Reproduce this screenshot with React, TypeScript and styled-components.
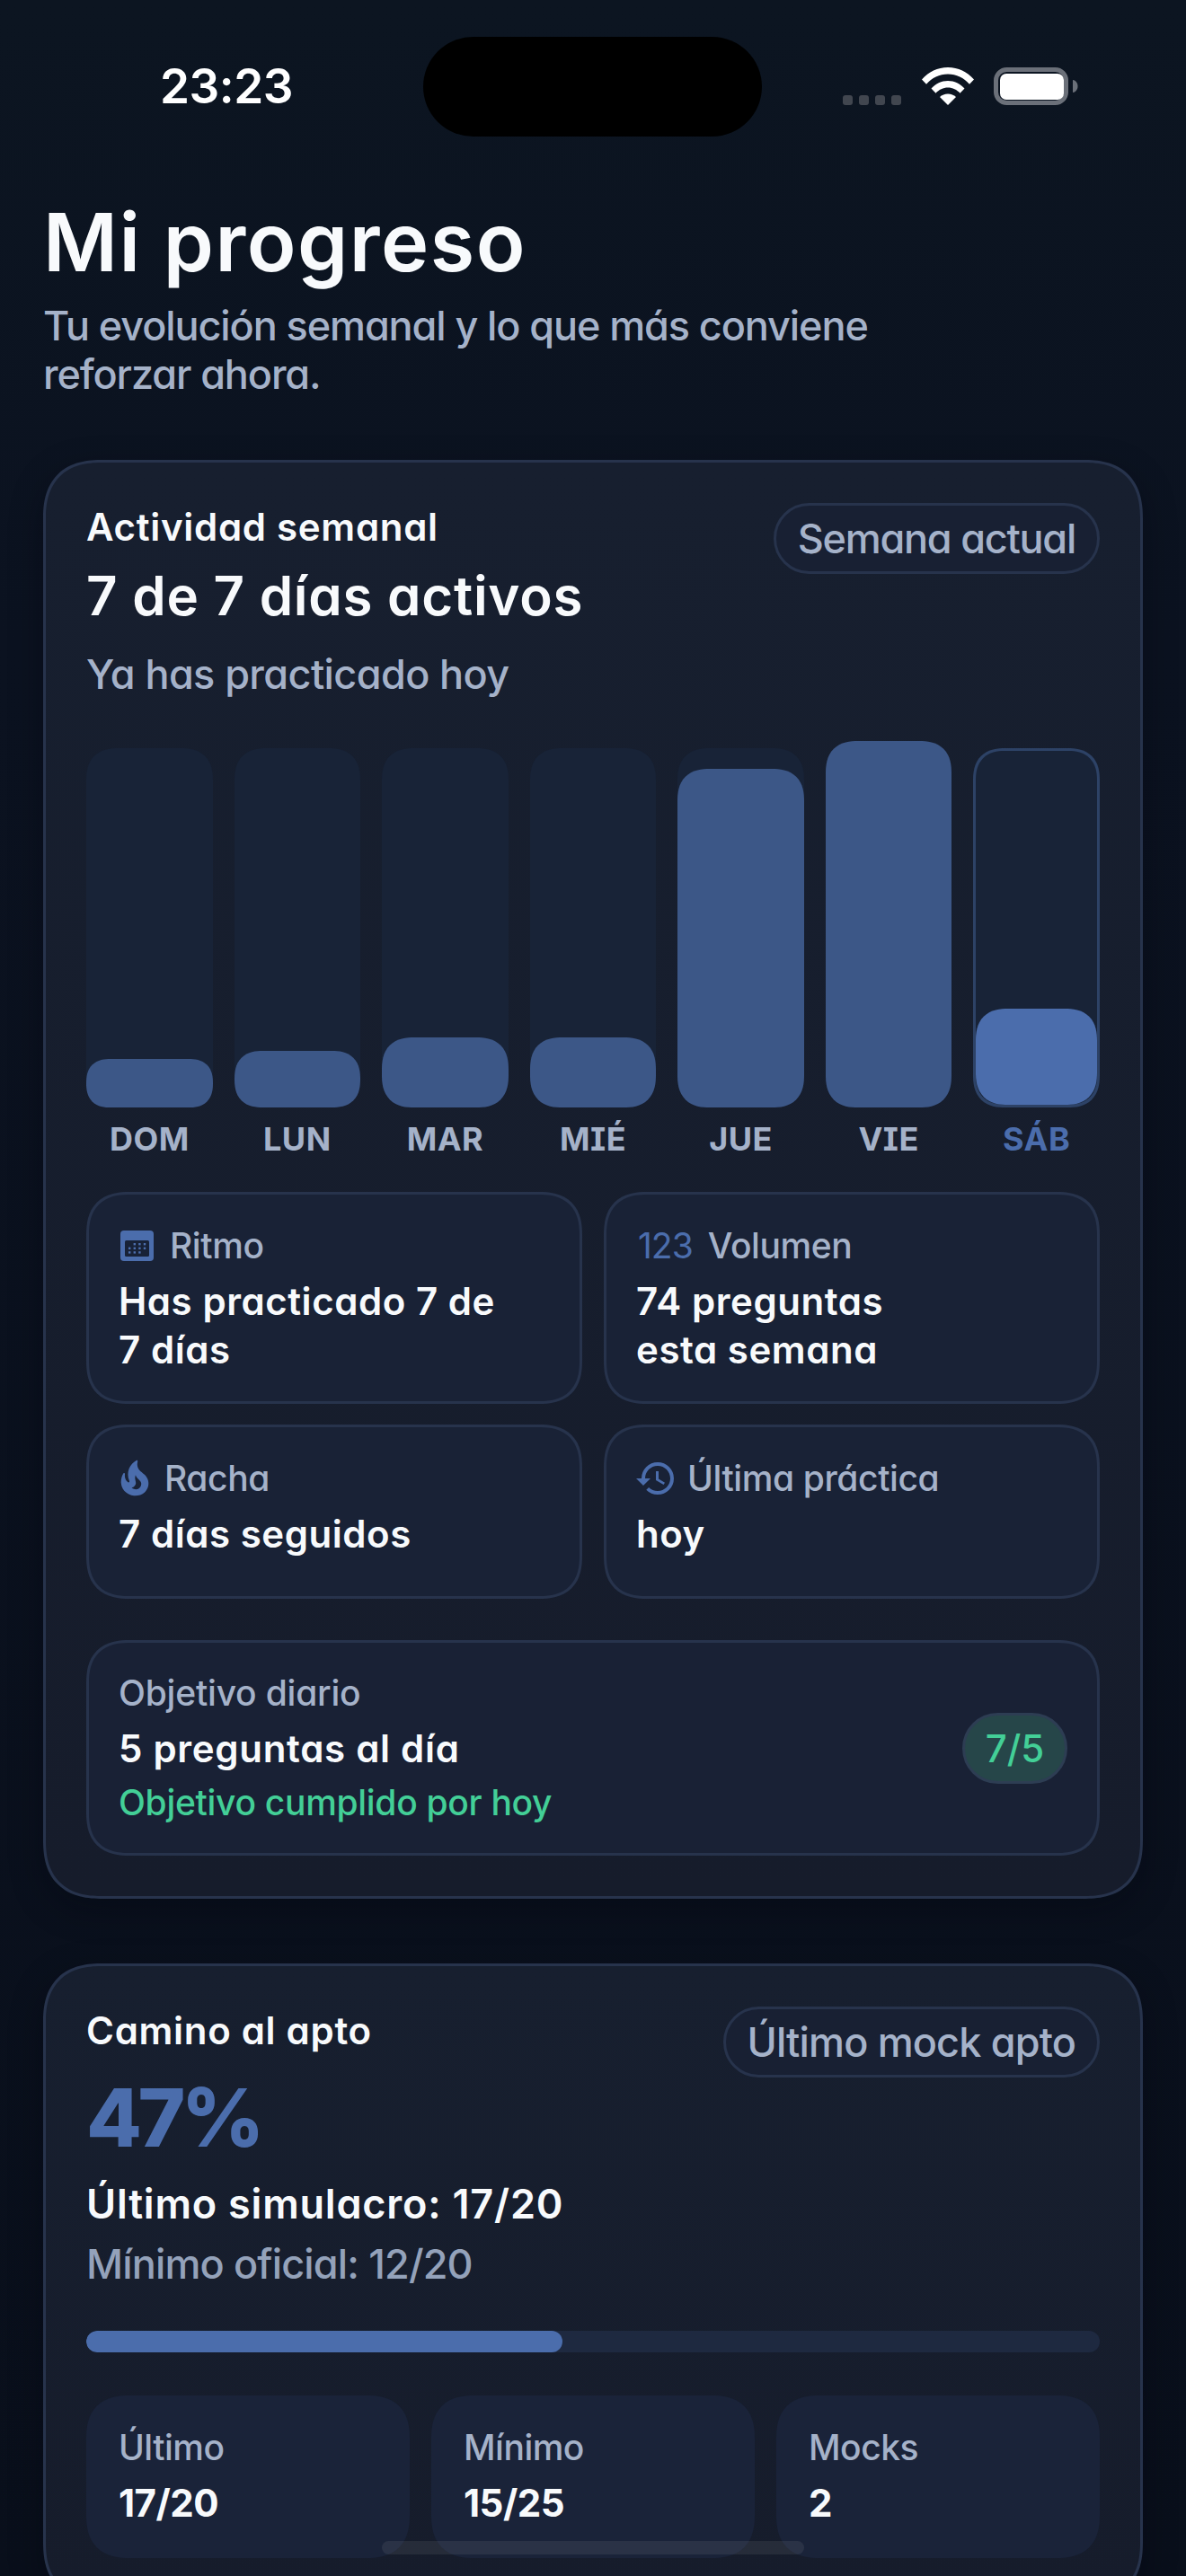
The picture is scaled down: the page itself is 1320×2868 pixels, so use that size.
import React from "react";
import styled, { createGlobalStyle } from "styled-components";

const Global = createGlobalStyle`
  html, body { margin: 0; padding: 0; background: #0a101c; }
  body {
    font-family: Inter, "Noto Sans", sans-serif;
    font-feature-settings: "cv11", "cv08", "ss03";
    color: #f8fafc;
  }
  * { box-sizing: border-box; }
`;

const Screen = styled.div`
  position: relative;
  width: 1320px;
  height: 2868px;
  overflow: hidden;
  background: linear-gradient(180deg, #0c1521 0%, #0b1220 25%, #090f1b 100%);
  padding: 0 48px;
`;

const StatusBar = styled.div`
  display: grid;
  grid-template-columns: 423px 377px 1fr;
  height: 204px;
  padding-top: 41px;
  margin: 0;
`;

const Time = styled.div`
  font-family: Inter, sans-serif;
  font-feature-settings: normal;
  font-weight: 600;
  font-size: 53px;
  line-height: 111px;
  padding-left: 130px;
  letter-spacing: -0.5px;
  color: #fff;
`;

const Island = styled.div`
  width: 377px;
  height: 111px;
  border-radius: 56px;
  background: #000;
`;

const StatusIcons = styled.div`
  display: flex;
  align-items: flex-start;
  padding: 34px 0 0 90px;
`;

const SignalDots = styled.div`
  display: flex;
  gap: 7px;
  padding-top: 31px;
  margin-right: 23px;
`;

const SignalDot = styled.span`
  width: 11px;
  height: 11px;
  border-radius: 3px;
  background: #41464f;
`;

const Wifi = styled.svg`
  width: 58px;
  height: 42px;
  margin-right: 22px;
`;

const Battery = styled.svg`
  width: 94px;
  height: 42px;
`;

const Title = styled.h1`
  margin: 0;
  font-size: 90px;
  line-height: 132px;
  font-weight: 600;
  letter-spacing: 1.5px;
  color: #f8fafc;
`;

const Subtitle = styled.p`
  margin: 0 0 68px;
  font-size: 45px;
  line-height: 54px;
  font-weight: 450;
  letter-spacing: -1.1px;
  color: #a5b2c9;
  max-width: 1000px;
`;

const Card = styled.section`
  border: 3px solid #27334c;
  border-radius: 66px;
  corner-shape: superellipse(1.3);
  padding: 45px 45px 45px;
  margin-bottom: 72px;
  background: linear-gradient(180deg, #171f2f 0%, #161c2b 100%);
  box-shadow: 0 12px 36px rgba(3, 6, 14, 0.35);
`;

const CardHead = styled.div`
  display: flex;
  justify-content: space-between;
  align-items: flex-start;
`;

const HeadText = styled.div`
  display: flex;
  flex-direction: column;
`;

const Eyebrow = styled.div`
  font-size: 42px;
  line-height: 54px;
  font-weight: 600;
  letter-spacing: 0.7px;
  color: #f8fafc;
`;

const Headline = styled.div`
  margin-top: 13px;
  font-size: 60px;
  line-height: 72px;
  font-weight: 600;
  letter-spacing: 0.75px;
  color: #f8fafc;
`;

const Lead = styled.div`
  margin-top: 25px;
  font-size: 45px;
  line-height: 54px;
  font-weight: 550;
  letter-spacing: -0.6px;
  color: #a5b2c9;
`;

const Pill = styled.div<{ $spacing: number }>`
  height: 79px;
  border: 3px solid #27334c;
  border-radius: 40px;
  padding: 0 24px;
  font-size: 45px;
  line-height: 73px;
  font-weight: 450;
  letter-spacing: ${(p) => p.$spacing}px;
  color: #a5b2c9;
  background: #182033;
  white-space: nowrap;
`;

const Chart = styled.div`
  display: grid;
  grid-template-columns: repeat(7, 1fr);
  gap: 24px;
  margin-top: 55px;
`;

const DayCol = styled.div`
  display: flex;
  flex-direction: column;
  align-items: stretch;
`;

const Track = styled.div<{ $today?: boolean }>`
  display: flex;
  flex-direction: column;
  justify-content: flex-end;
  height: 400px;
  border-radius: 36px;
  corner-shape: superellipse(1.3);
  background: #182337;
  border: ${(p) => (p.$today ? "3px solid #2d4266" : "0")};
`;

const Fill = styled.div<{ $today?: boolean }>`
  flex-shrink: 0;
  border-radius: 36px;
  corner-shape: superellipse(1.3);
  background: ${(p) => (p.$today ? "#4b6dac" : "#3c5787")};
`;

const DayLabel = styled.div<{ $today?: boolean }>`
  margin-top: 17px;
  text-align: center;
  font-size: 36px;
  line-height: 36px;
  font-weight: 700;
  letter-spacing: 0.5px;
  color: ${(p) => (p.$today ? "#4b6dac" : "#a5b2c9")};
`;

const InfoGrid = styled.div`
  display: grid;
  grid-template-columns: 1fr 1fr;
  gap: 23px 24px;
  margin-top: 41px;
`;

const InfoCard = styled.div`
  min-height: 194px;
  border: 3px solid #27334c;
  border-radius: 48px;
  corner-shape: superellipse(1.3);
  padding: 33px 33px 30px;
  background: #192236;
`;

const InfoHead = styled.div<{ $gap: number }>`
  display: flex;
  align-items: center;
  gap: ${(p) => p.$gap}px;
  height: 48px;
  font-size: 39px;
  line-height: 48px;
  font-weight: 550;
  letter-spacing: -0.4px;
  color: #a5b2c9;
`;

const IconNumbers = styled.span`
  margin-left: 2px;
  font-size: 39px;
  font-weight: 400;
  letter-spacing: -1px;
  color: #4b6dac;
`;

const IconSvg = styled.svg`
  flex-shrink: 0;
  fill: #4b6dac;
`;

const InfoValue = styled.div`
  margin-top: 11px;
  font-size: 42px;
  line-height: 54px;
  font-weight: 600;
  letter-spacing: 0.55px;
  color: #f8fafc;
`;

const GoalCard = styled.div`
  display: flex;
  align-items: center;
  justify-content: space-between;
  height: 240px;
  margin-top: 46px;
  border: 3px solid #27334c;
  border-radius: 48px;
  corner-shape: superellipse(1.3);
  padding: 0 33px;
  background: #192135;
`;

const GoalText = styled.div`
  display: flex;
  flex-direction: column;
`;

const GoalLabel = styled.div`
  font-size: 39px;
  line-height: 48px;
  font-weight: 550;
  letter-spacing: -0.2px;
  color: #a5b2c9;
`;

const GoalValue = styled.div`
  margin-top: 11px;
  font-size: 42px;
  line-height: 54px;
  font-weight: 600;
  letter-spacing: 0.7px;
  color: #f8fafc;
`;

const GoalDone = styled.div`
  margin-top: 9px;
  font-size: 39px;
  line-height: 48px;
  font-weight: 550;
  letter-spacing: -0.3px;
  color: #43cf97;
`;

const GoalBadge = styled.div`
  width: 117px;
  height: 79px;
  border: 3px solid #2d3d53;
  border-radius: 40px;
  background: #264649;
  text-align: center;
  font-size: 42px;
  line-height: 73px;
  font-weight: 500;
  color: #43cf97;
`;

const Percent = styled.div`
  margin-top: 22px;
  font-size: 90px;
  line-height: 96px;
  font-weight: 800;
  letter-spacing: -4.5px;
  color: #4b6dac;
`;

const Simulacro = styled.div`
  margin-top: 18px;
  font-size: 45px;
  line-height: 60px;
  font-weight: 600;
  letter-spacing: 0.8px;
  color: #f8fafc;
`;

const Minimum = styled.div`
  margin-top: 7px;
  font-size: 45px;
  line-height: 60px;
  font-weight: 450;
  letter-spacing: -0.85px;
  color: #94a2ba;
`;

const Progress = styled.div`
  height: 24px;
  margin-top: 44px;
  border-radius: 12px;
  background: #1e2940;
  overflow: hidden;
`;

const ProgressFill = styled.div<{ $value: number }>`
  width: ${(p) => p.$value}%;
  height: 100%;
  border-radius: 12px;
  background: #4b6dac;
`;

const Stats = styled.div`
  display: grid;
  grid-template-columns: repeat(3, 1fr);
  gap: 24px;
  margin-top: 48px;
`;

const Stat = styled.div`
  height: 181px;
  border-radius: 48px;
  corner-shape: superellipse(1.3);
  padding: 34px 36px;
  background: #1a2339;
`;

const StatLabel = styled.div`
  font-size: 39px;
  line-height: 48px;
  font-weight: 550;
  letter-spacing: -0.5px;
  color: #a5b2c9;
`;

const StatValue = styled.div`
  margin-top: 11px;
  font-size: 42px;
  line-height: 54px;
  font-weight: 700;
  letter-spacing: -0.5px;
  color: #f8fafc;
`;

const HomeIndicator = styled.div`
  position: absolute;
  left: 425px;
  top: 2829px;
  width: 470px;
  height: 15px;
  border-radius: 8px;
  background: rgba(255, 255, 255, 0.07);
`;

const days = [
  { label: "DOM", height: 54 },
  { label: "LUN", height: 63 },
  { label: "MAR", height: 78 },
  { label: "MIÉ", height: 78 },
  { label: "JUE", height: 377 },
  { label: "VIE", height: 408 },
  { label: "SÁB", height: 107, today: true },
];

const stats = [
  { label: "Último", value: "17/20" },
  { label: "Mínimo", value: "15/25" },
  { label: "Mocks", value: "2" },
];

const CalendarIcon = () => (
  <IconSvg width="37" height="34" viewBox="0 0 37 34" style={{ marginLeft: 2 }}>
    <rect x="0" y="0" width="37" height="34" rx="4" />
    <rect x="5" y="11" width="27" height="18" rx="1.5" fill="#182237" />
    {[0, 1, 2, 3].map((c) =>
      [0, 1, 2].map((r) =>
        c + r === 0 || (c === 3 && r === 2) ? null : (
          <rect key={`${c}-${r}`} x={9 + c * 5.6} y={14 + r * 4.6} width="2.4" height="2.4" />
        ),
      ),
    )}
  </IconSvg>
);

const FlameIcon = () => (
  <IconSvg width="46" height="46" viewBox="0 0 24 24" style={{ marginLeft: -5 }}>
    <path d="M19.48 12.35c-1.57-4.08-7.16-4.3-5.81-10.23.1-.44-.37-.78-.75-.55C9.29 3.71 6.68 8 8.87 13.62c.18.46-.36.89-.75.59-1.81-1.37-2-3.34-1.84-4.75.06-.52-.62-.77-.91-.34C4.69 10.16 4 11.84 4 14.37c.38 5.6 5.11 7.32 6.81 7.54 2.43.31 5.06-.14 6.95-1.87 2.08-1.93 2.84-5.01 1.72-7.69zm-9.28 5.03c1.44-.35 2.18-1.39 2.38-2.31.33-1.43-.96-2.83-.09-5.09.33 1.87 3.27 3.04 3.27 5.08.08 2.53-2.66 4.7-5.56 2.32z" />
  </IconSvg>
);

const HistoryIcon = () => (
  <IconSvg width="48" height="48" viewBox="0 0 24 24" style={{ marginLeft: -2 }}>
    <path d="M13 3a9 9 0 0 0-9 9H1l3.89 3.89.07.14L9 12H6c0-3.87 3.13-7 7-7s7 3.13 7 7-3.13 7-7 7c-1.93 0-3.68-.79-4.94-2.06l-1.42 1.42A8.954 8.954 0 0 0 13 21a9 9 0 0 0 0-18zm-1 5v5l4.28 2.54.72-1.21-3.5-2.08V8H12z" />
  </IconSvg>
);

export default function App() {
  return (
    <>
      <Global />
      <Screen>
        <StatusBar>
          <Time>23:23</Time>
          <Island />
          <StatusIcons>
            <SignalDots>
              <SignalDot />
              <SignalDot />
              <SignalDot />
              <SignalDot />
            </SignalDots>
            <Wifi viewBox="0 0 58 42">
              <path
                fill="#fff"
                d="M0 13.5C7.5 5 17.5 0 29 0s21.500 5 29 13.500l-5 5.200C46.800 11.800 38.500 7.500 29 7.500S11.200 11.800 5 18.700z"
              />
              <path
                fill="#fff"
                d="M10.500 23.500C15.200 18.300 21.800 15 29 15s13.800 3.300 18.500 8.500l-5 5.200C39 25 34.300 22.500 29 22.500S19 25 15.500 28.700z"
              />
              <path fill="#fff" d="M20 33c2.300-2.300 5.500-3.500 9-3.500s6.700 1.200 9 3.500L29 42z" />
            </Wifi>
            <Battery viewBox="0 0 94 42">
              <rect x="2.500" y="2.500" width="78" height="37" rx="12" fill="none" stroke="#6b7079" strokeWidth="5" />
              <rect x="7" y="7" width="71" height="29" rx="7" fill="#fff" />
              <path d="M88 14c3.500.6 5.500 3.500 5.500 7s-2 6.400-5.500 7z" fill="#6b7079" />
            </Battery>
          </StatusIcons>
        </StatusBar>

        <Title>Mi progreso</Title>
        <Subtitle>Tu evolución semanal y lo que más conviene reforzar ahora.</Subtitle>

        <Card>
          <CardHead>
            <HeadText>
              <Eyebrow>Actividad semanal</Eyebrow>
              <Headline>7 de 7 días activos</Headline>
              <Lead>Ya has practicado hoy</Lead>
            </HeadText>
            <Pill $spacing={-1.25}>Semana actual</Pill>
          </CardHead>

          <Chart>
            {days.map((d) => (
              <DayCol key={d.label}>
                <Track $today={d.today}>
                  <Fill $today={d.today} style={{ height: d.height }} />
                </Track>
                <DayLabel $today={d.today}>{d.label}</DayLabel>
              </DayCol>
            ))}
          </Chart>

          <InfoGrid>
            <InfoCard>
              <InfoHead $gap={18}>
                <CalendarIcon />
                Ritmo
              </InfoHead>
              <InfoValue>
                Has practicado 7 de
                <br />7 días
              </InfoValue>
            </InfoCard>
            <InfoCard>
              <InfoHead $gap={17}>
                <IconNumbers>123</IconNumbers>
                Volumen
              </InfoHead>
              <InfoValue>
                74 preguntas
                <br />
                esta semana
              </InfoValue>
            </InfoCard>
            <InfoCard>
              <InfoHead $gap={10}>
                <FlameIcon />
                Racha
              </InfoHead>
              <InfoValue>7 días seguidos</InfoValue>
            </InfoCard>
            <InfoCard>
              <InfoHead $gap={11}>
                <HistoryIcon />
                Última práctica
              </InfoHead>
              <InfoValue>hoy</InfoValue>
            </InfoCard>
          </InfoGrid>

          <GoalCard>
            <GoalText>
              <GoalLabel>Objetivo diario</GoalLabel>
              <GoalValue>5 preguntas al día</GoalValue>
              <GoalDone>Objetivo cumplido por hoy</GoalDone>
            </GoalText>
            <GoalBadge>7/5</GoalBadge>
          </GoalCard>
        </Card>

        <Card>
          <CardHead>
            <HeadText>
              <Eyebrow>Camino al apto</Eyebrow>
              <Percent>47%</Percent>
              <Simulacro>Último simulacro: 17/20</Simulacro>
              <Minimum>Mínimo oficial: 12/20</Minimum>
            </HeadText>
            <Pill $spacing={-0.85}>Último mock apto</Pill>
          </CardHead>
          <Progress>
            <ProgressFill $value={47} />
          </Progress>
          <Stats>
            {stats.map((s) => (
              <Stat key={s.label}>
                <StatLabel>{s.label}</StatLabel>
                <StatValue>{s.value}</StatValue>
              </Stat>
            ))}
          </Stats>
        </Card>
        <HomeIndicator />
      </Screen>
    </>
  );
}
